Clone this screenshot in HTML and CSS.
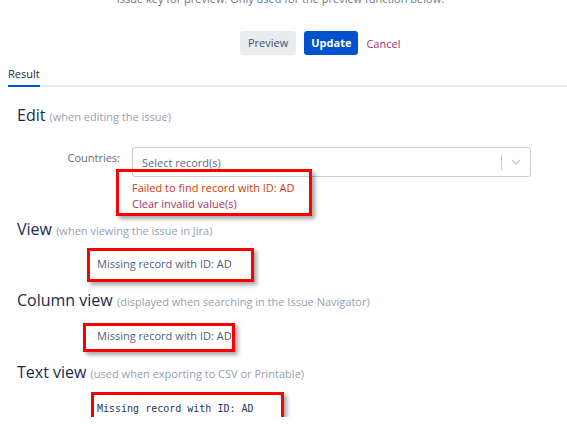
FILE: index.html
```html
<!DOCTYPE html>
<html lang="en">
<head>
<meta charset="utf-8">
<title>Field configuration – Result</title>
<link rel="stylesheet" href="styles.css">
</head>
<body>
<div class="page">
  <p class="hint">issue key for preview. Only used for the preview function below.</p>

  <div class="actions">
    <button class="btn btn-default" type="button">Preview</button>
    <button class="btn btn-primary" type="button">Update</button>
    <a class="cancel" href="#">Cancel</a>
  </div>

  <div class="tabs">
    <span class="tab is-active">Result</span>
  </div>

  <section class="result">
    <h2 class="mode mode-first">Edit <small>(when editing the issue)</small></h2>
    <div class="field">
      <label class="field-label">Countries:</label>
      <div class="field-body">
        <div class="select">
          <span class="placeholder">Select record(s)</span>
          <span class="indicators">
            <span class="sep"></span>
            <span class="chevron">
              <svg width="10" height="6" viewBox="0 0 10 6"><path d="M1 1l4 4 4-4" fill="none" stroke="#c1c7d0" stroke-width="1.3"/></svg>
            </span>
          </span>
        </div>
        <div class="errors">
          <div class="error">Failed to find record with ID: AD</div>
          <a class="clear" href="#">Clear invalid value(s)</a>
          <span class="mark mark-edit"></span>
        </div>
      </div>
    </div>

    <h2 class="mode mode-view">View <small>(when viewing the issue in Jira)</small></h2>
    <div class="value value-view">
      Missing record with ID: AD
      <span class="mark mark-view"></span>
    </div>

    <h2 class="mode">Column view <small>(displayed when searching in the Issue Navigator)</small></h2>
    <div class="value">
      Missing record with ID: AD
      <span class="mark mark-column"></span>
    </div>

    <h2 class="mode">Text view <small>(used when exporting to CSV or Printable)</small></h2>
    <div class="value value-text">
      Missing record with ID: AD
      <span class="mark mark-text"></span>
    </div>
  </section>
</div>
</body>
</html>
```

FILE: styles.css
```css
html, body {
  margin: 0;
  padding: 0;
  background: #ffffff;
}

body {
  font-family: "Segoe UI", "Open Sans", "Noto Sans", sans-serif;
  font-size: 11px;
  color: #172b4d;
  overflow: hidden;
}

.page {
  width: 567px;
}

.hint {
  margin: -8px 0 0 117px;
  font-size: 11px;
  line-height: 14px;
  color: #6b778c;
}

/* form buttons */
.actions {
  display: flex;
  align-items: center;
  gap: 8px;
  margin-top: 25px;
  padding-left: 240px;
}

.btn {
  height: 24px;
  padding: 0 8px;
  border: none;
  border-radius: 3px;
  font-family: inherit;
  font-size: 11px;
  line-height: 24px;
}

.btn-default {
  background: #ebecf0;
  color: #42526e;
}

.btn-primary {
  padding: 0 7px;
  background: #0052cc;
  color: #ffffff;
  font-weight: 700;
}

.cancel {
  color: #a5306b;
  text-decoration: none;
  font-size: 11px;
}

/* tabs */
.tabs {
  display: flex;
  margin: 11px 0 0 8px;
  border-bottom: 2px solid #ebecf0;
}

.tab {
  line-height: 16px;
  padding-bottom: 3px;
  margin-bottom: -2px;
  color: #172b4d;
  font-size: 11px;
}

.tab.is-active {
  border-bottom: 2px solid #0052cc;
}

/* result panel */
.result {
  padding-left: 17px;
}

.mode {
  margin: 18px 0 0;
  font-size: 16px;
  line-height: 20px;
  font-weight: 400;
  color: #172b4d;
}

.mode small {
  font-size: 11px;
  color: #97a0af;
}

.mode-first {
  margin-top: 18px;
}

.mode-view {
  margin-top: 7px;
}

.field {
  display: flex;
  gap: 12px;
  margin-top: 20px;
}

.field-label {
  width: 103px;
  padding-top: 3px;
  line-height: 16px;
  text-align: right;
  color: #5e6c84;
}

.field-body {
  width: 399px;
}

.select {
  display: flex;
  align-items: center;
  box-sizing: border-box;
  height: 30px;
  padding-left: 9px;
  border: 1px solid #cccccc;
  border-radius: 3px;
}

.placeholder {
  flex: 1;
  color: #5e6c84;
}

.indicators {
  display: flex;
  align-items: center;
}

.sep {
  width: 1px;
  height: 15px;
  background: #cccccc;
}

.chevron {
  display: flex;
  justify-content: center;
  width: 28px;
}

.errors {
  position: relative;
  margin-top: 3px;
  line-height: 16px;
}

.error {
  color: #de350b;
}

.clear {
  color: #a5306b;
  text-decoration: none;
}

.value {
  position: relative;
  margin: 16px 0 0 80px;
  line-height: 16px;
  color: #505f79;
}

.value-view {
  margin-top: 15px;
}

.value-text {
  margin-top: 17px;
  font-family: "DejaVu Sans Mono", "Liberation Mono", monospace;
  font-size: 10px;
  color: #253858;
}

/* red review markers drawn over the rendered values */
.mark {
  position: absolute;
  box-sizing: border-box;
  border: 3px solid #ff0000;
  box-shadow: 3px 3px 4px rgba(0, 0, 0, 0.35);
  pointer-events: none;
}

.mark-edit {
  left: -16px;
  top: -11px;
  width: 196px;
  height: 47px;
}

.mark-view {
  left: -10px;
  top: -8px;
  width: 167px;
  height: 34px;
}

.mark-column {
  left: -14px;
  top: -5px;
  width: 152px;
  height: 29px;
}

.mark-text {
  left: -6px;
  top: -9px;
  width: 193px;
  height: 35px;
}
```
